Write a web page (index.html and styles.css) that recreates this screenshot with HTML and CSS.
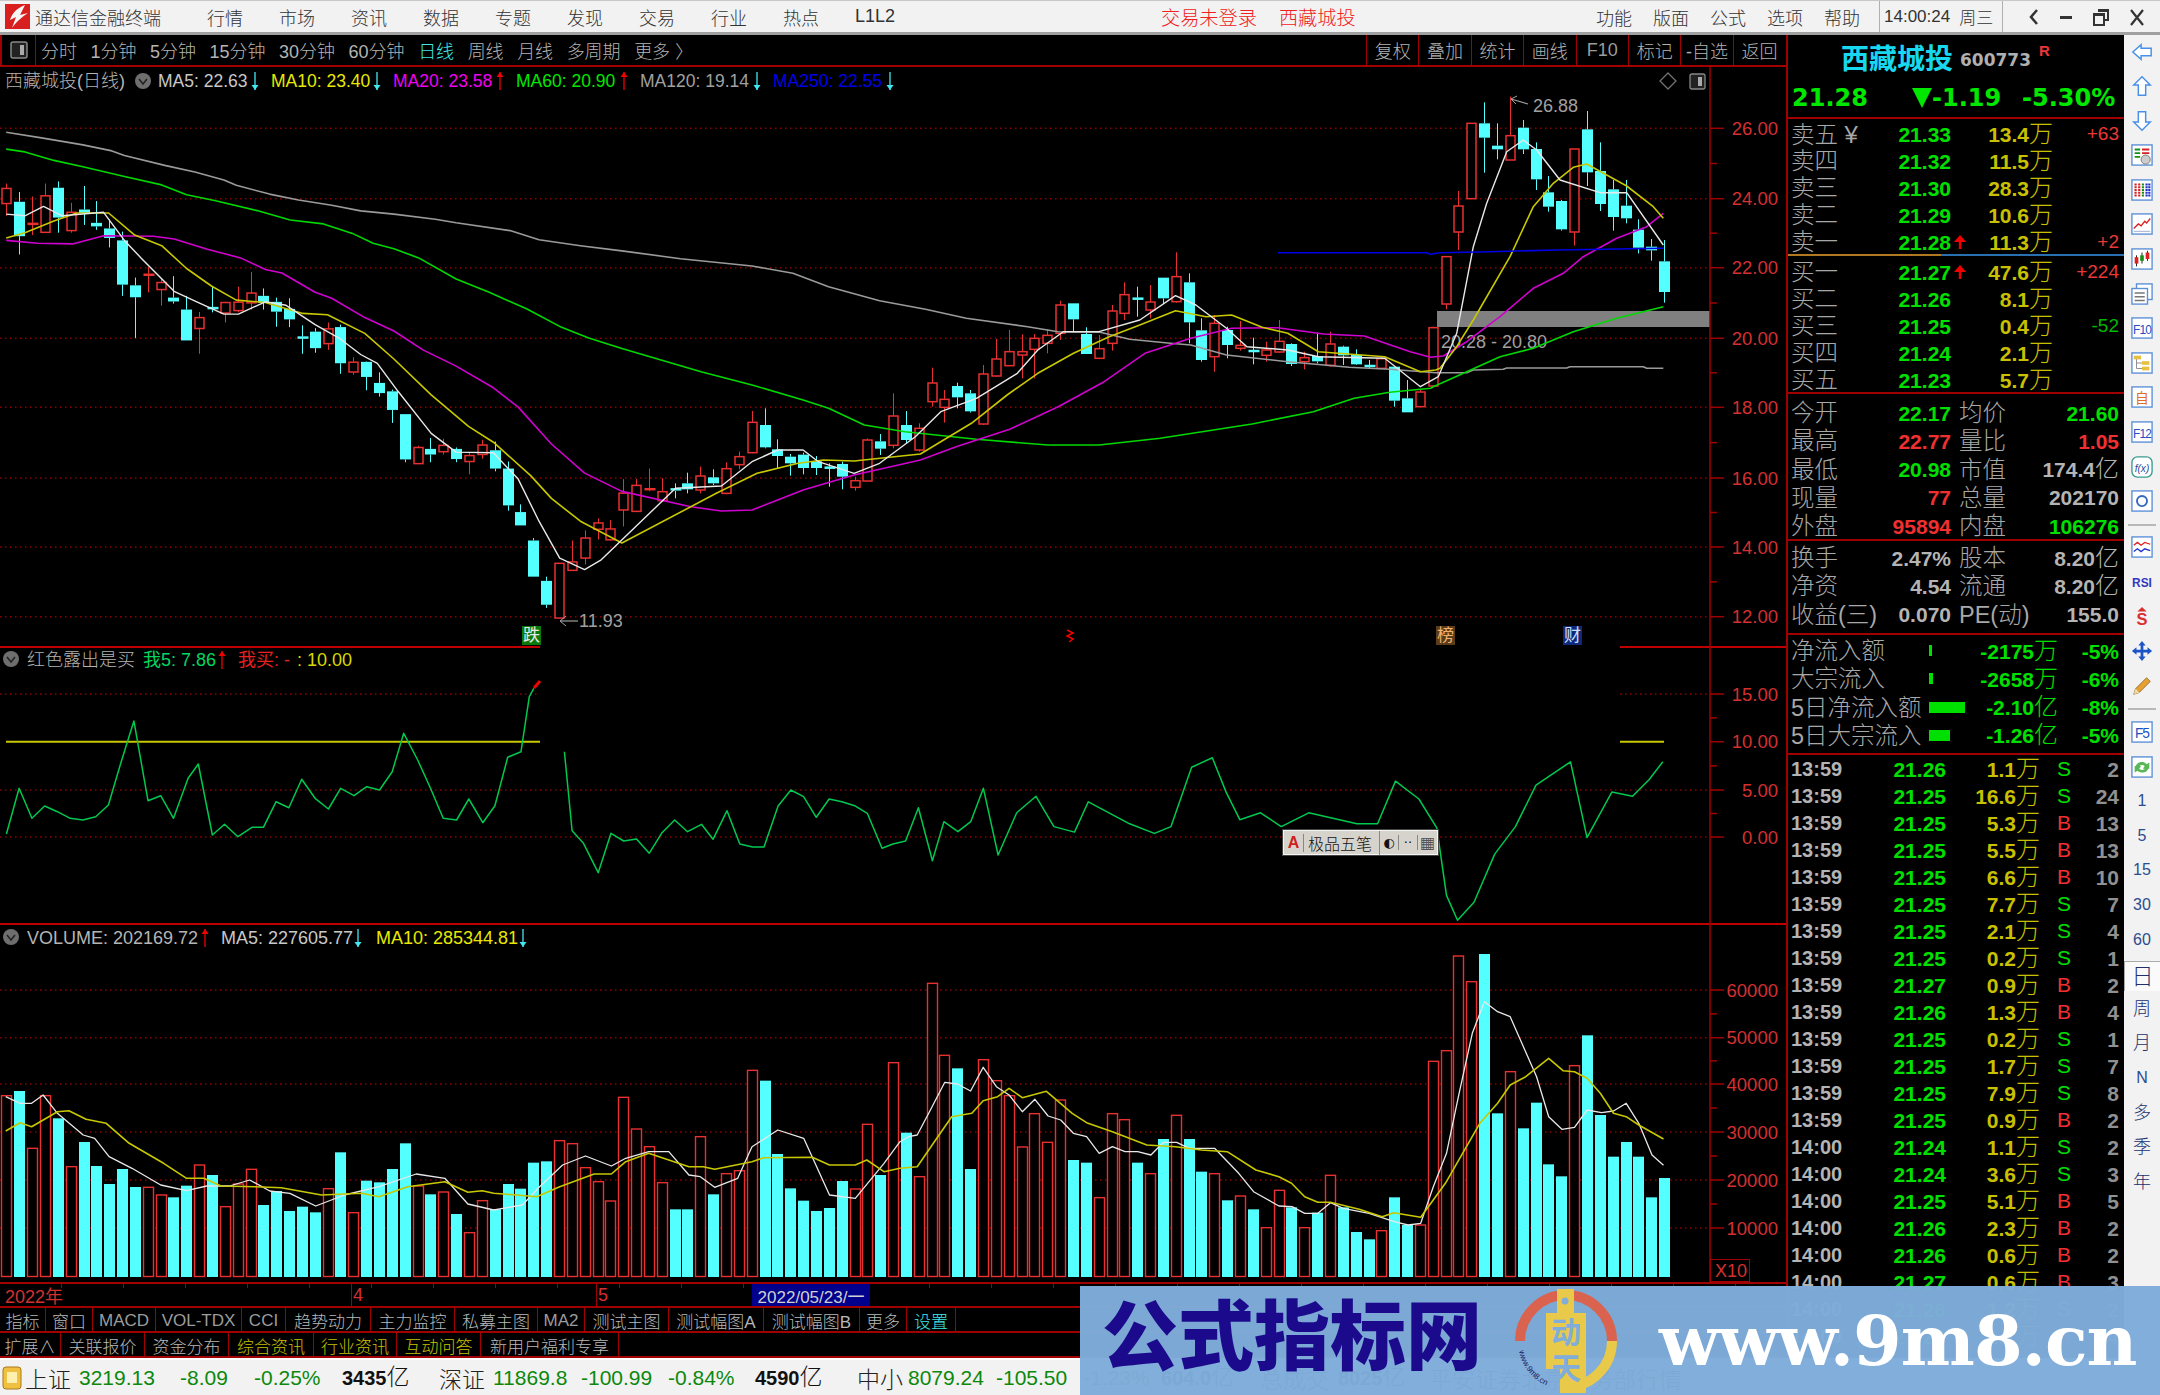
FILE: index.html
```html
<!DOCTYPE html>
<html lang="zh-CN">
<head>
    <meta charset="UTF-8">
    <title>通达信金融终端</title>
    <link rel="stylesheet" href="styles.css">
</head>
<body>
    <div class="app">
        <div class="titlebar">
            <div class="logo"><svg viewBox="0 0 25 25" width="25" height="25"><rect width="25" height="25" fill="#d81e1e"/><path d="M20 1 C12 4 7 9 5 16 L11 13 L7 24 C12 17 17 13 23 9 L15 11 Z" fill="#f5f5f5"/></svg></div>
            <span class="app-name">通达信金融终端</span>
            <nav class="menu">
                <span>行情</span><span>市场</span><span>资讯</span><span>数据</span><span>专题</span><span>发现</span><span>交易</span><span>行业</span><span>热点</span><span>L1L2</span>
            </nav>
            <div class="login"><span>交易未登录</span><span>西藏城投</span></div>
            <nav class="menu-right"><span>功能</span><span>版面</span><span>公式</span><span>选项</span><span>帮助</span></nav>
            <div class="clock"><span>14:00:24</span><span>周三</span></div>
            <div class="winbtns">
                <svg width="12" height="20" viewBox="0 0 12 20"><path d="M9 3 L3 10 L9 17" fill="none" stroke="#333" stroke-width="2.5"/></svg>
                <svg width="14" height="20" viewBox="0 0 14 20"><rect x="1" y="9" width="12" height="3" fill="#333"/></svg>
                <svg width="18" height="20" viewBox="0 0 18 20"><path d="M6 3 H16 V13 H13 M2 7 H12 V18 H2 Z M2 8 H12 M6 4 H16" fill="none" stroke="#333" stroke-width="2"/></svg>
                <svg width="16" height="20" viewBox="0 0 16 20"><path d="M2 3 L14 18 M14 3 L2 18" stroke="#333" stroke-width="2.2"/></svg>
            </div>
        </div>

        <div class="workarea">
            <div class="left">
                <div class="toolbar">
                    <div class="tool-icon"><svg width="18" height="18" viewBox="0 0 18 18"><rect x="1" y="1" width="16" height="16" rx="2" fill="#222" stroke="#888" stroke-width="1.5"/><rect x="10" y="4" width="4" height="10" fill="#aaa"/></svg></div>
                    <div class="periods">
                        <span>分时</span><span>1分钟</span><span>5分钟</span><span>15分钟</span><span>30分钟</span><span>60分钟</span><span class="active">日线</span><span>周线</span><span>月线</span><span>多周期</span><span>更多 〉</span>
                    </div>
                    <div class="tool-btns">
                        <span>复权</span><span>叠加</span><span>统计</span><span>画线</span><span class="dim">F10</span><span>标记</span><span>-自选</span><span>返回</span>
                    </div>
                </div>
                <svg id="chart" class="chart" viewBox="0 67 1786 1215" width="1786" height="1215"></svg>
                <div class="dateaxis">
                    <span class="date-cell w-year">2022年</span><span class="date-cell w-apr">4</span><span class="date-cell w-may">5</span><span class="date-box">2022/05/23/一</span>
                </div>
                <div class="tabs tabs-one">
                    <span>指标</span><span>窗口</span><span class="dim">MACD</span><span class="dim">VOL-TDX</span><span class="dim">CCI</span><span>趋势动力</span><span>主力监控</span><span>私募主图</span><span class="dim">MA2</span><span>测试主图</span><span>测试幅图A</span><span>测试幅图B</span><span>更多</span><span class="cyan">设置</span>
                </div>
                <div class="tabs tabs-two">
                    <span>扩展∧</span><span>关联报价</span><span>资金分布</span><span class="yellow">综合资讯</span><span class="yellow">行业资讯</span><span class="yellow">互动问答</span><span>新用户福利专享</span>
                </div>
            </div>

            <div class="quote">
                <div class="q-name"><span class="stock">西藏城投</span><span class="code">600773</span><sup class="r-mark">R</sup></div>
                <div class="q-price"><span class="last">21.28</span><span class="tri"></span><span class="chg">-1.19</span><span class="pct">-5.30%</span></div>

                <div class="book book-sell">
                    <div class="book-row"><span class="lbl">卖五 <em class="yen">¥</em></span><b class="up-g">21.33</b><i></i><b class="vol">13.4<small>万</small></b><span class="d-red">+63</span></div>
                    <div class="book-row"><span class="lbl">卖四</span><b class="up-g">21.32</b><i></i><b class="vol">11.5<small>万</small></b><span></span></div>
                    <div class="book-row"><span class="lbl">卖三</span><b class="up-g">21.30</b><i></i><b class="vol">28.3<small>万</small></b><span></span></div>
                    <div class="book-row"><span class="lbl">卖二</span><b class="up-g">21.29</b><i></i><b class="vol">10.6<small>万</small></b><span></span></div>
                    <div class="book-row"><span class="lbl">卖一</span><b class="up-g">21.28</b><i class="arr"><svg width="12" height="14" viewBox="0 0 12 14"><path d="M6 0 L12 7 H7.200 V14 H4.800 V7 H0 Z" fill="#f00000"/></svg></i><b class="vol">11.3<small>万</small></b><span class="d-red">+2</span></div>
                </div>
                <div class="book-split"></div>
                <div class="book book-buy">
                    <div class="book-row"><span class="lbl">买一</span><b class="up-g">21.27</b><i class="arr"><svg width="12" height="14" viewBox="0 0 12 14"><path d="M6 0 L12 7 H7.200 V14 H4.800 V7 H0 Z" fill="#f00000"/></svg></i><b class="vol">47.6<small>万</small></b><span class="d-red">+224</span></div>
                    <div class="book-row"><span class="lbl">买二</span><b class="up-g">21.26</b><i></i><b class="vol">8.1<small>万</small></b><span></span></div>
                    <div class="book-row"><span class="lbl">买三</span><b class="up-g">21.25</b><i></i><b class="vol">0.4<small>万</small></b><span class="d-green">-52</span></div>
                    <div class="book-row"><span class="lbl">买四</span><b class="up-g">21.24</b><i></i><b class="vol">2.1<small>万</small></b><span></span></div>
                    <div class="book-row"><span class="lbl">买五</span><b class="up-g">21.23</b><i></i><b class="vol">5.7<small>万</small></b><span></span></div>
                </div>

                <div class="info info-a">
                    <div class="info-row"><span class="lbl">今开</span><b class="up-g">22.17</b><span class="lbl2">均价</span><b class="up-g">21.60</b></div>
                    <div class="info-row"><span class="lbl">最高</span><b class="red">22.77</b><span class="lbl2">量比</span><b class="red">1.05</b></div>
                    <div class="info-row"><span class="lbl">最低</span><b class="up-g">20.98</b><span class="lbl2">市值</span><b class="grey">174.4<small>亿</small></b></div>
                    <div class="info-row"><span class="lbl">现量</span><b class="red">77</b><span class="lbl2">总量</span><b class="grey">202170</b></div>
                    <div class="info-row"><span class="lbl">外盘</span><b class="red">95894</b><span class="lbl2">内盘</span><b class="up-g">106276</b></div>
                </div>
                <div class="info info-b">
                    <div class="info-row"><span class="lbl">换手</span><b class="grey">2.47%</b><span class="lbl2">股本</span><b class="grey">8.20<small>亿</small></b></div>
                    <div class="info-row"><span class="lbl">净资</span><b class="grey">4.54</b><span class="lbl2">流通</span><b class="grey">8.20<small>亿</small></b></div>
                    <div class="info-row"><span class="lbl">收益(三)</span><b class="grey">0.070</b><span class="lbl2">PE(动)</span><b class="grey">155.0</b></div>
                </div>
                <div class="flows">
                    <div class="flow-row"><span class="lbl">净流入额</span><span class="flow-bar b1"></span><b class="up-g">-2175<small>万</small></b><b class="up-g">-5%</b></div>
                    <div class="flow-row"><span class="lbl">大宗流入</span><span class="flow-bar b2"></span><b class="up-g">-2658<small>万</small></b><b class="up-g">-6%</b></div>
                    <div class="flow-row"><span class="lbl">5日净流入额</span><span class="flow-bar b3"></span><b class="up-g">-2.10<small>亿</small></b><b class="up-g">-8%</b></div>
                    <div class="flow-row"><span class="lbl">5日大宗流入</span><span class="flow-bar b4"></span><b class="up-g">-1.26<small>亿</small></b><b class="up-g">-5%</b></div>
                </div>
                <div class="ticks" id="ticks"></div>
            </div>

            <div class="sidebar">
                <svg class="ico" viewBox="0 0 24 24"><path d="M2 12 L11 4 V8 H22 V16 H11 V20 Z" fill="#fff" stroke="#4a90e8" stroke-width="1.6"/></svg>
                <svg class="ico" viewBox="0 0 24 24"><path d="M12 2 L21 11 H16 V22 H8 V11 H3 Z" fill="#fff" stroke="#4a90e8" stroke-width="1.6"/></svg>
                <svg class="ico" viewBox="0 0 24 24"><path d="M12 22 L21 13 H16 V2 H8 V13 H3 Z" fill="#fff" stroke="#4a90e8" stroke-width="1.6"/></svg>
                <svg class="ico" viewBox="0 0 24 24"><rect x="1" y="1" width="22" height="22" fill="#fff" stroke="#5b8fd8" stroke-width="1.5"/><path d="M4 6 H10 M4 10 H10 M4 14 H10" stroke="#189018" stroke-width="2"/><path d="M12 6 H20 M12 10 H20" stroke="#d82020" stroke-width="2"/><circle cx="16" cy="17" r="5" fill="#ccc" stroke="#777"/></svg>
                <svg class="ico" viewBox="0 0 24 24"><rect x="1" y="1" width="22" height="22" fill="#fff" stroke="#5b8fd8" stroke-width="1.5"/><path d="M5 5 V19 M9 5 V19" stroke="#d82020" stroke-width="2.4" stroke-dasharray="2 1"/><path d="M13 5 V19" stroke="#189018" stroke-width="2.4" stroke-dasharray="2 1"/><path d="M17 5 V19 M20 5 V19" stroke="#2030c8" stroke-width="2.4" stroke-dasharray="2 1"/></svg>
                <svg class="ico" viewBox="0 0 24 24"><rect x="1" y="1" width="22" height="22" fill="#fff" stroke="#5b8fd8" stroke-width="1.5"/><path d="M3 17 L8 12 L11 14 L15 9 L17 11 L21 6" fill="none" stroke="#e02020" stroke-width="1.5"/><path d="M3 20 H21" stroke="#9ac" stroke-width="1"/></svg>
                <svg class="ico" viewBox="0 0 24 24"><rect x="1" y="1" width="22" height="22" fill="#fff" stroke="#5b8fd8" stroke-width="1.5"/><path d="M6 8 V20 M12 5 V17 M18 3 V14" stroke="#111" stroke-width="1"/><rect x="4" y="10" width="4" height="7" fill="#e02020"/><rect x="10" y="8" width="4" height="6" fill="#189018"/><rect x="16" y="5" width="4" height="7" fill="#e02020"/></svg>
                <svg class="ico" viewBox="0 0 24 24"><rect x="6" y="1" width="17" height="17" fill="#fff" stroke="#5b8fd8" stroke-width="1.5"/><rect x="1" y="6" width="17" height="17" fill="#fff" stroke="#5b8fd8" stroke-width="1.5"/><path d="M4 11 H15 M4 15 H15 M4 19 H15" stroke="#777" stroke-width="1.6"/></svg>
                <svg class="ico" viewBox="0 0 24 24"><rect x="1" y="1" width="22" height="22" fill="#fff" stroke="#5b8fd8" stroke-width="1.5"/><text x="12" y="18" class="ico-text">F10</text></svg>
                <svg class="ico" viewBox="0 0 24 24"><rect x="1" y="1" width="22" height="22" fill="#fff" stroke="#5b8fd8" stroke-width="1.5"/><path d="M6 7 V18 H13 M6 12 H13" fill="none" stroke="#888"/><rect x="3" y="4" width="8" height="4" fill="#e8c040"/><rect x="12" y="10" width="8" height="4" fill="#e8c040"/><rect x="12" y="16" width="8" height="4" fill="#e8c040"/></svg>
                <svg class="ico" viewBox="0 0 24 24"><rect x="1" y="1" width="22" height="22" fill="#fff" stroke="#5b8fd8" stroke-width="1.5"/><text x="12" y="18" class="ico-zi">自</text></svg>
                <svg class="ico" viewBox="0 0 24 24"><rect x="1" y="1" width="22" height="22" fill="#fff" stroke="#5b8fd8" stroke-width="1.5"/><text x="12" y="18" class="ico-text">F12</text></svg>
                <svg class="ico" viewBox="0 0 24 24"><rect x="1" y="1" width="22" height="22" rx="6" fill="#fff" stroke="#3c9c90" stroke-width="1.5"/><text x="12" y="17" class="ico-fx">f(x)</text></svg>
                <svg class="ico" viewBox="0 0 24 24"><rect x="1" y="1" width="22" height="22" fill="#fff" stroke="#5b8fd8" stroke-width="1.5"/><circle cx="12" cy="12" r="5.5" fill="none" stroke="#3068c0" stroke-width="2"/></svg>
                <div class="side-sep"></div>
                <svg class="ico" viewBox="0 0 24 24"><rect x="1" y="1" width="22" height="22" fill="#fff" stroke="#5b8fd8" stroke-width="1.5"/><path d="M3 10 L7 7 L11 10 L15 7 L21 9" fill="none" stroke="#e02020" stroke-width="1.4"/><path d="M3 17 L7 14 L11 17 L15 14 L21 16" fill="none" stroke="#2030c8" stroke-width="1.4"/></svg>
                <svg class="ico" viewBox="0 0 24 24"><text x="12" y="17" class="ico-rsi">RSI</text></svg>
                <svg class="ico" viewBox="0 0 24 24"><path d="M12 1 L17 6 H7 Z" fill="#d83030"/><text x="12" y="21" class="ico-s">S</text></svg>
                <svg class="ico" viewBox="0 0 24 24"><path d="M12 1 L16 6 H13.500 V10.500 H18 V8 L23 12 L18 16 V13.500 H13.500 V18 H16 L12 23 L8 18 H10.500 V13.500 H6 V16 L1 12 L6 8 V10.500 H10.500 V6 H8 Z" fill="#1c54c8"/></svg>
                <svg class="ico" viewBox="0 0 24 24"><path d="M3 21 L5 15 L17 3 L21 7 L9 19 Z" fill="#e8a030" stroke="#907030"/><path d="M3 21 L5 15 L9 19 Z" fill="#f0dcb0"/></svg>
                <div class="side-sep"></div>
                <svg class="ico" viewBox="0 0 24 24"><rect x="1" y="1" width="22" height="22" fill="#fff" stroke="#5b8fd8" stroke-width="1.5"/><text x="12" y="18" class="ico-text big">F5</text></svg>
                <svg class="ico" viewBox="0 0 24 24"><rect x="1" y="1" width="22" height="22" fill="#fff" stroke="#5b8fd8" stroke-width="1.5"/><path d="M5 12 C6 6 14 5 17 9 L20 7 V14 H13 L15 11 C13 9 9 9 8 13 Z M19 13 C18 19 10 19 7 16 L4 18 V11 H11 L9 14 C11 16 15 16 16 12 Z" fill="#58b858"/></svg>
                <span class="side-num">1</span><span class="side-num">5</span><span class="side-num">15</span><span class="side-num">30</span><span class="side-num">60</span>
                <span class="side-day selected">日</span><span class="side-day">周</span><span class="side-day">月</span><span class="side-num">N</span><span class="side-day">多</span><span class="side-day">季</span><span class="side-day">年</span>
            </div>
        </div>

        <div class="statusbar">
            <svg width="20" height="24" viewBox="0 0 20 24"><rect x="1" y="1" width="18" height="22" rx="3" fill="#f0c040" stroke="#a87818"/><rect x="5" y="6" width="10" height="11" fill="#fff0b0"/></svg>
            <span class="s-idx">上证</span><span class="s-g c1">3219.13</span><span class="s-g c2">-8.09</span><span class="s-g c3">-0.25%</span><span class="s-k c4">3435<small>亿</small></span>
            <span class="s-idx c5">深证</span><span class="s-g c1b">11869.8</span><span class="s-g c2b">-100.99</span><span class="s-g c3b">-0.84%</span><span class="s-k c4b">4590<small>亿</small></span>
            <span class="s-idx c5b">中小</span><span class="s-g c1b">8079.24</span><span class="s-g c2b">-105.50</span><span class="s-g c3c">-1.23%</span><span class="s-k c4c">604.0<small>亿</small></span><span class="s-idx c5c">总成交</span><span class="s-k c4d">8025<small>亿</small></span><span class="s-idx c5d">平安证券北京业务部行情</span>
        </div>

        <div class="ime">
            <span class="ime-a">A</span><span class="ime-name">极品五笔</span><span class="ime-btn">◐</span><span class="ime-btn">··</span><span class="ime-kb">▦</span>
        </div>

        <div class="watermark">
            <span class="wm-title">公式指标网</span>
            <svg class="wm-logo" width="104" height="104" viewBox="0 0 104 104">
                <path d="M6 52 A46 46 0 0 1 98 52" fill="none" stroke="#d9634e" stroke-width="10"/>
                <path d="M98 52 A46 46 0 0 1 52 98" fill="none" stroke="#e8c94a" stroke-width="10"/>
                <path d="M43 0 H60 V24 H72 V104 H46 V80 H32 V24 H43 Z" fill="#e8c94a"/>
                <circle cx="51" cy="12" r="3.500" fill="#80add9"/>
                <text x="52" y="54" class="logo-glyph">动</text>
                <text x="52" y="90" class="logo-glyph">天</text>
                <path id="wmarc" d="M5 62 A48 48 0 0 0 44 100" fill="none"/>
                <text class="logo-small"><textPath href="#wmarc">www.9m8.cn</textPath></text>
            </svg>
            <span class="wm-url">www.9m8.cn</span>
        </div>
    </div>

    <script src="chart.js"></script>
</body>
</html>
```

FILE: styles.css
```css
* {
    box-sizing: border-box;
}
body {
    margin: 0;
    background: #000;
    font-family: "Liberation Sans", "Noto Sans CJK SC", sans-serif;
}
.app {
    position: relative;
    width: 2160px;
    height: 1395px;
    overflow: hidden;
    display: flex;
    flex-direction: column;
}

/* title bar */
.titlebar {
    height: 35px;
    flex: none;
    display: flex;
    align-items: center;
    background: #f2f2f2;
    border-top: 1px solid #c8c8c8;
    border-bottom: 3px solid #a0a0a0;
    color: #333;
    font-size: 18px;
    font-weight: 300;
}
.logo {
    width: 35px;
    padding-left: 5px;
    height: 25px;
}
.app-name {
    width: 172px;
}
.menu {
    display: flex;
    align-items: center;
    gap: 36px;
    width: 954px;
}
.login {
    width: 435px;
    display: flex;
    gap: 22px;
    color: #f02020;
    font-size: 19.200px;
}
.menu-right {
    display: flex;
    gap: 21px;
    width: 283px;
}
.clock {
    width: 124px;
    height: 31px;
    display: flex;
    align-items: center;
    gap: 9px;
    padding-left: 4px;
    border-left: 1px solid #b0b0b0;
    border-right: 1px solid #b0b0b0;
    font-size: 17px;
}
.winbtns {
    flex: 1;
    display: flex;
    justify-content: space-around;
    align-items: center;
    padding: 0 6px 0 16px;
}

.workarea {
    height: 1323px;
    flex: none;
    display: flex;
}
.left {
    width: 1788px;
    flex: none;
    display: flex;
    flex-direction: column;
    background: #000;
    border-right: 2px solid #a00000;
}

/* period toolbar */
.toolbar {
    height: 32px;
    flex: none;
    display: flex;
    align-items: center;
    border-bottom: 2px solid #a00000;
    color: #b4b4b4;
    font-size: 18px;
    font-weight: 300;
}
.tool-icon {
    width: 36px;
    height: 30px;
    display: flex;
    align-items: center;
    justify-content: center;
    border-left: 2px solid #a00000;
    border-right: 1px solid #a00000;
}
.periods {
    display: flex;
    gap: 13.500px;
    padding-left: 5px;
    width: 1330px;
}
.periods .active {
    color: #40e8e8;
}
.tool-btns {
    flex: 1;
    height: 30px;
    display: flex;
}
.tool-btns span {
    width: 52.400px;
    display: flex;
    align-items: center;
    justify-content: center;
    border-left: 1px solid #a00000;
    white-space: nowrap;
}
.tool-btns .dim,
.tabs .dim {
    color: #9c9c9c;
}

.chart {
    display: block;
    flex: none;
}
.chart text {
    font-family: "Liberation Sans", "Noto Sans CJK SC", sans-serif;
    font-size: 18px;
    dominant-baseline: central;
}
.chart .axis-label {
    text-anchor: end;
    fill: #d43030;
    font-size: 18.500px;
}
.chart .thin {
    font-weight: 300;
}

/* date row and tab rows */
.dateaxis {
    height: 24px;
    flex: none;
    display: flex;
    border-top: 2px solid #a00000;
    color: #d43030;
    font-size: 18px;
    background: repeating-linear-gradient(90deg, transparent 0 61px, #a00000 61px 62px) top / 100% 4px no-repeat;
}
.date-cell {
    padding-left: 5px;
    display: flex;
    align-items: center;
}
.w-year {
    width: 351px;
}
.w-apr {
    width: 245px;
    border-left: 1px solid #a00000;
    padding-left: 1px;
}
.w-may {
    width: 156px;
    border-left: 1px solid #a00000;
    padding-left: 1px;
}
.date-box {
    width: 118px;
    background: #00008c;
    color: #d0d0d0;
    display: flex;
    align-items: center;
    justify-content: center;
    font-size: 17px;
    white-space: nowrap;
}
.tabs {
    flex: none;
    display: grid;
    color: #b8b8b8;
    font-size: 17px;
    font-weight: 300;
    border-top: 2px solid #a00000;
}
.tabs span {
    display: flex;
    align-items: center;
    justify-content: center;
    white-space: nowrap;
    border-right: 1px solid #a00000;
}
.tabs-one {
    height: 25px;
    grid-template-columns: 46px 47px 63px 86px 44px 85px 84px 83px 47px 84px 95px 96px 47px 49px;
    justify-content: start;
}
.tabs-two {
    height: 27px;
    grid-template-columns: 61px 84px 84px 85px 83px 84px 138px;
    justify-content: start;
    border-bottom: 2px solid #a00000;
}
.tabs .cyan {
    color: #40e8e8;
}
.tabs .yellow {
    color: #c8c000;
}

/* quote panel */
.quote {
    width: 336px;
    flex: none;
    background: #000;
    color: #a8a8a8;
    overflow: hidden;
}
.q-name {
    height: 44px;
    display: flex;
    align-items: center;
    padding-left: 53px;
}
.stock {
    color: #18d8f0;
    font-size: 28px;
    font-weight: 700;
}
.code {
    margin-left: 7px;
    margin-top: 6px;
    color: #b0b0b0;
    font-family: "DejaVu Sans", sans-serif;
    font-size: 17px;
    font-weight: 700;
}
.r-mark {
    margin: -14px 0 0 8px;
    color: #e83838;
    font-size: 15px;
    font-weight: 700;
}
.q-price {
    height: 40px;
    display: flex;
    align-items: center;
    padding-left: 4px;
    border-bottom: 2px solid #a00000;
    color: #00e800;
    font-family: "DejaVu Sans", sans-serif;
    font-weight: 700;
    font-size: 24px;
}
.last {
    width: 120px;
}
.tri {
    width: 0;
    height: 0;
    border-left: 10px solid transparent;
    border-right: 10px solid transparent;
    border-top: 20px solid #00e800;
}
.chg {
    width: 90px;
}
.book-row,
.info-row,
.flow-row,
.tick-row {
    display: grid;
    align-items: center;
    padding-left: 3px;
    white-space: nowrap;
}
.book-row {
    height: 27px;
    grid-template-columns: 107px 53px 17px 85px 66px;
}
.lbl,
.lbl2 {
    margin-top: 2px;
    font-size: 23.500px;
    font-weight: 300;
    line-height: 27px;
}
.yen {
    font-style: normal;
    font-size: 24px;
}
b {
    margin-top: 1px;
    font-size: 21px;
    line-height: 27px;
    text-align: right;
}
b small {
    font-size: 24px;
    font-weight: 300;
    line-height: 0;
}
.up-g {
    color: #00e000;
}
.red {
    color: #f03030;
    text-align: right;
}
.grey {
    color: #b4b4b4;
    text-align: right;
}
.vol {
    color: #c8c000;
}
.arr {
    display: flex;
    justify-content: center;
}
.d-red,
.d-green {
    font-size: 19px;
    text-align: right;
}
.d-red {
    color: #e83838;
}
.d-green {
    color: #00b800;
}
.book-split {
    height: 2px;
    background: linear-gradient(90deg, #b07820 0 153px, #2870b0 153px);
}
.book-buy {
    padding-top: 1px;
    height: 138px;
    border-bottom: 2px solid #a00000;
    margin-bottom: 2px;
}
.info-row {
    height: 28.250px;
    grid-template-columns: 60px 100px 68px 100px;
}
.lbl2 {
    padding-left: 8px;
}
.info-a {
    height: 145px;
    padding-top: 2px;
    border-bottom: 2px solid #a00000;
}
.info-b {
    height: 94px;
    padding-top: 2px;
    border-bottom: 2px solid #a00000;
}
.flow-row {
    height: 28.300px;
    grid-template-columns: 138px 40px 89px 61px;
}
.flows {
    height: 120px;
    padding-top: 1px;
    border-bottom: 2px solid #a00000;
}
.flow-bar {
    height: 11px;
    background: #00e000;
}
.b1 {
    width: 3px;
}
.b2 {
    width: 4px;
}
.b3 {
    width: 36px;
}
.b4 {
    width: 21px;
}
.tick-row {
    height: 27px;
    grid-template-columns: 60px 95px 94px 48px 31px;
}
.tick-row .t {
    color: #b4b4b4;
    font-weight: 700;
    font-size: 20px;
    text-align: left;
}
.tick-row .bs {
    text-align: center;
    font-size: 21px;
}
.bs-b {
    color: #f03030;
}
.bs-s {
    color: #00e000;
}
.tick-row .n {
    color: #909090;
}

/* right sidebar */
.sidebar {
    flex: 1;
    display: flex;
    flex-direction: column;
    align-items: center;
    padding-top: 5.500px;
    background: #f2f2f2;
    gap: 12.600px;
}
.ico {
    width: 22px;
    height: 22px;
    flex: none;
    overflow: visible;
}
.ico-text,
.ico-rsi,
.ico-fx,
.ico-zi,
.ico-s {
    text-anchor: middle;
    font-size: 12px;
    fill: #2050c0;
}
.ico-text {
    font-size: 13px;
    letter-spacing: -1px;
}
.ico-text.big {
    font-size: 15px;
}
.ico-zi {
    font-size: 15px;
    fill: #e07020;
}
.ico-fx {
    font-style: italic;
    font-size: 11px;
    fill: #2848a0;
}
.ico-rsi {
    font-weight: 700;
    font-size: 13px;
    fill: #3038c0;
}
.ico-s {
    font-weight: 700;
    font-size: 18px;
    fill: #d83030;
}
.side-sep {
    width: 28px;
    height: 2px;
    flex: none;
    margin: -1px 0 -2px;
    background: #b8b8b8;
}
.side-num,
.side-day {
    height: 22px;
    line-height: 22px;
    flex: none;
    color: #2c4c90;
    font-size: 16px;
}
.side-day {
    font-size: 18px;
    font-weight: 300;
    color: #203070;
}
.selected {
    width: 36px;
    height: 30px;
    margin: -2px 0 -6px;
    line-height: 30px;
    text-align: center;
    font-size: 22px;
    background: #fafafa;
    border-top: 1px solid #aaa;
    border-left: 1px solid #aaa;
}

/* index strip */
.statusbar {
    height: 37px;
    flex: none;
    display: flex;
    align-items: center;
    padding-left: 2px;
    background: #f2f2f2;
    border-top: 2px solid #fff;
    font-size: 21px;
    white-space: nowrap;
}
.s-idx {
    margin-left: 3px;
    width: 54px;
    color: #222;
    font-size: 23px;
    font-weight: 300;
}
.s-g {
    color: #0c880c;
}
.s-k {
    margin-top: 0;
    color: #111;
    font-weight: 700;
    font-size: 20px;
    line-height: 30px;
}
.s-k small {
    font-size: 23px;
    font-weight: 300;
    line-height: 0;
}
.c1 {
    width: 101px;
}
.c2 {
    width: 74px;
}
.c3 {
    width: 88px;
}
.c4 {
    width: 94px;
}
.c5 {
    width: 54px;
}
.c1b {
    width: 88px;
}
.c2b {
    width: 87px;
}
.c3b {
    width: 87px;
}
.c4b {
    width: 99px;
}
.c5b {
    width: 51px;
}
.c3c {
    width: 78px;
}
.c4c {
    width: 96px;
}
.c5c {
    width: 78px;
}
.c4d {
    width: 88px;
}
.c5d {
    width: 300px;
}

/* input method bar sits on top of the chart */
.ime {
    position: absolute;
    left: 1283px;
    top: 830px;
    width: 155px;
    height: 25px;
    display: flex;
    align-items: center;
    background: #d6d3cc;
    border: 1px solid #f4f4f4;
    outline: 1px solid #444;
    color: #111;
    font-size: 16px;
}
.ime-a {
    width: 20px;
    text-align: center;
    color: #d02020;
    font-weight: 700;
    border-right: 1px solid #888;
}
.ime-name {
    width: 76px;
    padding-left: 4px;
    font-weight: 300;
    border-right: 1px solid #888;
}
.ime-btn {
    width: 19px;
    text-align: center;
    font-family: "DejaVu Sans", sans-serif;
    font-size: 13px;
    border-right: 1px solid #888;
}
.ime-kb {
    flex: 1;
    text-align: center;
    font-family: "DejaVu Sans", sans-serif;
    color: #555;
}

/* watermark banner */
.watermark {
    position: absolute;
    left: 1080px;
    top: 1286px;
    width: 1080px;
    height: 109px;
    display: flex;
    align-items: center;
    padding-left: 22px;
    background: rgba(126, 172, 217, .975);
}
.wm-title {
    width: 373px;
    margin-top: -6px;
    color: #1c0a8c;
    font-size: 76px;
    font-weight: 900;
    line-height: 1;
    white-space: nowrap;
}
.wm-logo {
    flex: none;
    margin-left: 39px;
}
.logo-glyph {
    text-anchor: middle;
    fill: #80add9;
    font-size: 30px;
    font-weight: 700;
}
.logo-small {
    font-size: 8px;
    fill: #1a1a60;
}
.wm-url {
    margin-left: 41px;
    color: #fff;
    font-family: "DejaVu Serif", serif;
    font-size: 70px;
    font-weight: 700;
    letter-spacing: -1px;
    white-space: nowrap;
}
```

FILE: chart.js
```js
// trace helpers: each block of numbers was read off a different crop of the source
const traceA = ([x, y]) => [x / 2.412, 100 + y * 0.351];
const traceB = ([x, y]) => [650 + x / 1.96, 230 + y / 3];
const traceC = ([x, y]) => [1300 + x / 3, 80 + y / 3];
const traceVolA = ([x, y]) => [x / 1.742, 930 + y / 3];
const traceVolB = ([x, y]) => [900 + x / 1.742, 930 + y / 3];
const traceInd = ([x, y]) => [x / 1.568, 640 + y / 3];
const traceThumb = ([x, y]) => [x * 1.3776, y * 1.3776];

const RED = '#e83030';
const CYAN = '#54ffff';
const GRID = '#a00000';
const SPACING = 12.85;
const barX = i => 6.4 + SPACING * i;

// [up, high, top, bottom, low]
const candlesA = [
    [1,238,252,295,330],[0,262,290,388,440],[1,275,350,355,385],[1,238,273,377,377],[0,232,250,335,378],
    [1,293,320,372,378],[0,245,312,322,356],[0,288,350,360,370],[0,340,366,393,420],[0,375,400,526,558],
    [0,506,528,562,678],[1,476,495,500,548],[1,510,520,540,586],[0,502,563,574,580],[0,558,597,685,685],
    [1,604,620,651,723],[0,532,590,597,605],[1,575,577,607,634],[1,532,576,600,605],[1,490,550,578,597],
    [0,537,558,578,597],[0,563,575,603,646],[0,565,595,625,647],[0,642,674,677,723],[0,650,660,707,720],
    [1,634,652,694,712],[0,640,647,750,780],[1,733,747,775,783],[0,745,746,789,827],[0,776,806,835,845],
    [0,825,830,883,920],[0,895,895,1024,1032],[1,985,990,1036,1036],[0,963,994,1010,1032],[1,965,984,1002,1010],
    [0,990,994,1023,1032],[1,1005,1013,1030,1066],[1,968,983,1010,1022],[0,973,998,1050,1058],[0,1030,1050,1155,1170],
    [0,1152,1174,1212,1212],[0,1248,1255,1358,1358],[0,1358,1370,1438,1447],[1,1320,1320,1476,1476],[1,1255,1316,1340,1340],
    [1,1226,1248,1305,1323],[1,1192,1205,1223,1252],[1,1197,1222,1253,1255],[1,1080,1120,1168,1215],[1,1080,1098,1172,1172],
    [1,1050,1106,1112,1115]
];
const candlesB = [
    [1,745,785,812,815],[0,760,775,783,805],[0,728,760,778,790],[1,710,738,780,790],[0,718,742,760,765],
    [1,697,716,790,793],[1,665,680,704,718],[1,543,577,668,670],[0,535,585,652,655],[0,628,658,678,715],
    [0,672,680,700,737],[0,668,674,714,733],[0,678,694,714,735],[0,700,710,712,770],[0,695,702,740,778],
    [1,740,752,772,782],[1,625,630,753,753],[0,612,634,656,675],[1,490,558,646,655],[0,543,585,630,640],
    [1,580,595,660,665],[1,413,459,515,530],[1,480,508,532,578],[0,458,468,502,535],[0,480,490,544,548],
    [1,405,432,582,585],[1,327,387,438,440],[1,300,365,407,408],[1,313,365,375,445],[1,312,325,358,445],
    [1,298,316,340,370],[1,212,225,310,330],[0,220,220,268,305],[0,292,312,372,372],[1,315,356,385,385],
    [1,225,243,340,362],[1,157,194,250,270],[0,170,203,209,260],[1,165,216,240,265],[0,143,143,205,220],
    [1,67,140,215,218],[0,130,157,277,340],[0,265,301,390,395],[1,255,280,380,425],[0,290,300,345,385],
    [1,273,346,355,362],[0,323,360,364,403],[1,335,360,376,395],[1,270,334,366,368],[0,340,342,402,408],
    [1,365,383,395,418],[0,308,378,394,400],[1,305,342,406,410],[0,347,350,376,405],[0,358,375,403,405],
    [0,390,405,407,415],[1,380,386,415,418]
];
const candlesC = [
    [0,860,860,962,980],[0,900,955,997,997],[1,930,936,980,980],[1,740,743,918,918],[1,528,530,672,688],
    [1,333,378,456,510],[1,130,130,356,356],[0,67,130,173,278],[0,130,197,208,238],[1,50,167,240,240],
    [0,120,143,208,222],[0,187,207,298,330],[0,288,337,380,395],[0,360,363,448,452],[1,207,207,456,497],
    [0,93,148,277,318],[0,187,273,372,393],[0,300,328,411,452],[0,300,377,415,430],[0,418,449,503,520],
    [0,477,500,511,542],[0,480,544,636,668]
];

const ma120 = [
    ...[[15,92],[100,108],[200,128],[270,145],[300,158],[400,187],[470,205],[540,228],[570,243],[650,268],[720,285],[800,300],[870,316],[950,325],[1050,340],[1100,350],[1230,372],[1300,398],[1400,415],[1500,430]].map(traceA),
    ...[[60,86],[200,108],[280,130],[350,170],[450,212],[540,238],[620,265],[740,290],[800,305],[880,306],[940,328],[1020,340],[1060,345],[1130,375],[1250,395],[1370,412],[1450,418],[1540,428]].map(traceB),
    ...[[500,878],[520,870],[610,868],[620,864],[800,864],[810,860],[1030,860],[1040,865],[1090,865]].map(traceC)
];
const ma60 = [
    ...[[15,140],[60,148],[130,172],[200,190],[300,218],[390,242],[450,270],[520,287],[620,315],[700,342],[780,353],[850,380],[900,408],[950,424],[1010,450],[1100,510],[1180,548],[1270,595],[1350,645],[1420,678],[1500,708]].map(traceA),
    ...[[100,425],[200,465],[300,510],[350,535],[420,585],[500,605],[640,628],[780,645],[880,645],[1000,625],[1180,582],[1300,545],[1380,505],[1450,487],[1530,475]].map(traceB),
    ...[[400,920],[500,875],[600,830],[700,805],[820,755],[950,715],[1090,680]].map(traceC)
];
const ma20 = [
    ...[[15,400],[90,408],[175,410],[250,387],[370,388],[420,396],[500,425],[580,450],[640,483],[680,493],[760,548],[800,565],[880,620],[950,658],[1020,712],[1100,758],[1190,820],[1250,875],[1330,980],[1410,1063],[1500,1115]].map(traceA),
    ...[[80,830],[140,843],[200,840],[300,780],[400,735],[530,690],[600,650],[705,598],[800,530],[890,455],[970,370],[1060,325],[1140,295],[1230,293],[1320,312],[1400,318],[1490,365],[1530,382]].map(traceB),
    ...[[390,832],[430,828],[500,785],[600,710],[700,625],[790,580],[850,530],[950,475],[1040,440],[1090,400]].map(traceC)
];
const ma10 = [
    ...[[15,393],[60,378],[130,345],[185,322],[262,322],[325,385],[390,415],[450,480],[510,530],[570,570],[640,577],[730,608],[790,612],[880,665],[950,738],[1040,840],[1130,930],[1190,975],[1280,1070],[1330,1135],[1400,1200],[1500,1262]].map(traceA),
    ...[[130,790],[210,730],[290,700],[340,690],[400,693],[530,672],[630,580],[700,495],[760,430],[830,370],[900,320],[960,285],[1030,242],[1090,260],[1140,255],[1200,292],[1250,310],[1310,365],[1440,380],[1510,425],[1540,420]].map(traceB),
    ...[[420,865],[470,800],[520,720],[630,530],[700,380],[760,310],[820,262],[860,252],[920,285],[980,318],[1060,380],[1090,415]].map(traceC)
];
const ma5 = [
    ...[[15,325],[60,330],[105,303],[150,330],[250,320],[300,400],[340,450],[420,545],[480,578],[540,610],[575,610],[640,575],[690,585],[760,640],[820,680],[870,725],[910,750],[960,830],[1040,950],[1100,1003],[1190,1005],[1250,1080],[1300,1200],[1350,1305],[1410,1338],[1450,1310]].map(traceA),
    ...[[50,775],[140,768],[200,695],[250,660],[300,660],[330,695],[400,730],[450,700],[520,620],[570,545],[640,505],[720,430],[760,360],[810,305],[880,305],[960,270],[1030,197],[1070,225],[1130,295],[1170,350],[1250,360],[1310,380],[1440,385],[1510,470],[1545,440]].map(traceB),
    ...[[470,760],[520,500],[560,370],[620,215],[670,180],[710,210],[780,300],[900,338],[980,338],[1090,495]].map(traceC)
];
const ma250 = [[-66,518],[380,518],[390,523],[420,518],[570,515],[770,510],[1090,505]].map(traceC);

const indLeft = [[10,582],[30,445],[50,535],[70,498],[90,515],[110,535],[130,540],[150,530],[170,495],[190,365],[210,243],[232,482],[252,467],[272,535],[295,415],[311,372],[333,585],[352,553],[373,590],[395,562],[413,562],[433,485],[453,503],[473,418],[494,475],[515,507],[534,445],[555,467],[575,440],[595,450],[615,395],[633,280],[655,360],[675,445],[695,535],[716,540],[735,477],[757,548],[776,497],[796,352],[817,335],[830,170],[837,145]].map(traceInd);
const indRight = [
    ...[[885,335],[897,572],[915,610],[938,698],[958,580],[978,603],[998,597],[1018,640],[1038,578],[1058,540],[1078,575],[1100,553],[1118,598],[1140,512],[1160,612],[1180,621],[1198,621],[1220,498],[1240,450],[1260,470],[1280,532],[1300,477],[1320,485],[1340,497],[1360,520],[1383,625],[1400,612],[1420,603],[1440,503],[1462,662],[1480,545],[1502,575],[1522,545],[1542,445],[1565,645]].map(traceInd),
    ...[[738,590],[752,578],[765,600],[780,604],[790,582],[805,590],[820,598],[838,605],[850,600],[865,557],[880,550],[890,575],[900,595],[915,590],[930,600],[950,590],[985,598],[1000,598],[1013,567],[1030,580],[1043,601],[1050,650],[1058,668],[1070,655],[1085,620],[1100,600],[1115,570],[1140,553],[1152,608],[1170,575],[1185,578],[1197,566],[1207,553]].map(traceThumb)
];

// [up, top of bar]
const volA = [
    [1,497],[0,483],[1,655],[1,497],[0,565],[1,710],[0,636],[0,708],[0,762],[0,717],[0,771],[1,772],[1,795],[0,802],[0,767],
    [1,705],[0,735],[1,830],[1,762],[1,718],[0,825],[0,783],[0,843],[0,830],[0,847],[1,776],[0,667],[1,848],[0,752],[0,757],
    [0,717],[0,640],[1,768],[0,793],[1,786],[0,852],[1,908],[1,812],[0,838],[0,762],[0,776],[0,698],[0,694],[1,632],[1,641],
    [1,713],[1,755],[1,813],[1,502],[1,597],[1,650],[1,758],[0,838],[0,838],[1,620],[0,793],[1,731],[1,722],[1,421],[0,452],
    [0,672],[0,775],[0,812],[0,843],[0,834],[0,753],[1,777],[1,583],[0,735],[1,398]
];
const volB = [
    [0,608],[1,740],[1,160],[1,376],[0,415],[0,717],[1,389],[1,452],[1,497],[1,651],[1,551],[1,637],[1,510],[0,690],[0,698],
    [1,803],[1,551],[1,569],[0,698],[1,731],[0,627],[1,556],[0,627],[0,725],[1,731],[0,811],[1,798],[0,838],[1,893],[1,781],
    [0,832],[1,893],[0,848],[1,736],[0,832],[0,906],[0,928],[1,902],[0,802],[0,885],[1,885],[1,394],[1,362],[1,78],[1,155],
    [0,72],[0,550],[1,425],[0,595],[0,518],[0,703],[0,739],[1,407],[0,316],[0,555],[0,680],[0,636],[0,680],[0,802],[0,744]
];
const volMa5 = [
    ...[[10,500],[35,520],[55,520],[75,495],[100,550],[145,615],[165,625],[190,680],[230,715],[280,765],[325,782],[360,768],[400,768],[435,750],[470,783],[505,790],[550,828],[600,795],[660,770],[725,732],[775,745],[815,822],[860,840],[910,825],[940,770],[980,705],[1020,678],[1065,708],[1090,685],[1130,665],[1165,665],[1200,735],[1220,740],[1245,772],[1285,745],[1310,650],[1355,600],[1400,625],[1445,795],[1490,805],[1540,700]].map(traceVolA),
    ...[[0,635],[15,620],[30,615],[50,550],[78,457],[100,462],[123,483],[145,412],[168,470],[190,495],[213,545],[235,508],[258,558],[280,570],[302,610],[325,620],[347,670],[370,650],[392,665],[414,665],[437,675],[459,637],[482,637],[504,655],[548,655],[590,730],[616,785],[660,828],[683,830],[705,850],[728,850],[750,818],[772,835],[817,850],[861,875],[885,885],[907,880],[929,770],[952,670],[974,490],[997,310],[1018,215],[1041,245],[1063,260],[1086,350],[1109,440],[1130,560],[1153,598],[1175,592],[1197,540],[1222,548],[1243,543],[1265,520],[1287,580],[1310,675],[1330,706]].map(traceVolB)
];
const volMa10 = [
    ...[[10,603],[35,578],[55,590],[100,545],[120,542],[150,568],[185,580],[225,640],[285,700],[325,745],[355,745],[385,768],[445,770],[490,773],[560,795],[630,790],[660,800],[710,770],[775,755],[815,787],[840,782],[860,790],[900,795],[935,800],[975,770],[1035,732],[1065,732],[1090,695],[1130,670],[1200,710],[1225,710],[1245,718],[1310,695],[1330,683],[1415,682],[1445,705],[1490,705],[1510,690],[1540,725]].map(traceVolA),
    ...[[0,715],[30,710],[60,635],[90,560],[125,550],[145,512],[170,500],[190,475],[213,503],[255,484],[300,550],[325,578],[370,605],[430,645],[480,650],[525,660],[570,665],[620,720],[660,740],[682,760],[705,800],[728,817],[750,817],[800,838],[840,860],[860,848],[907,862],[950,760],[1010,580],[1041,520],[1063,465],[1090,440],[1130,385],[1155,422],[1175,425],[1197,445],[1220,490],[1243,550],[1265,560],[1287,585],[1330,627]].map(traceVolB)
];

let svg = '';

function seg(x1, y1, x2, y2, color, w = 1) {
    svg += `<line x1="${x1}" y1="${y1}" x2="${x2}" y2="${y2}" stroke="${color}" stroke-width="${w}"/>`;
}
function poly(pts, color, w = 1.5) {
    const d = pts.map(p => p[0].toFixed(1) + ',' + p[1].toFixed(1)).join(' ');
    svg += `<polyline points="${d}" fill="none" stroke="${color}" stroke-width="${w}" stroke-linejoin="round"/>`;
}
function dotted(y, x1 = 0, x2 = 1710) {
    svg += `<line x1="${x1}" y1="${y}" x2="${x2}" y2="${y}" stroke="#8c0000" stroke-width="1.5" stroke-dasharray="1.5 3.5"/>`;
}
function label(x, y, str, color, extra = '') {
    svg += `<text x="${x}" y="${y}" fill="${color}" ${extra}>${str}</text>`;
}
function axisLabel(y, str) {
    svg += `<text class="axis-label" x="1778" y="${y}">${str}</text>`;
}
function arrow(x, y, up) {
    const color = up ? '#f00000' : '#40e8f0';
    const tip = up ? y - 9 : y + 9;
    const base = up ? y - 4 : y + 4;
    seg(x, y + (up ? 9 : -9), x, tip, color, 1.3);
    svg += `<path d="M${x - 3.5} ${base} L${x} ${tip} L${x + 3.5} ${base} Z" fill="${color}"/>`;
}
function chevron(x, y) {
    svg += `<circle cx="${x}" cy="${y}" r="8" fill="#6e6e6e"/><path d="M${x - 4} ${y - 2} L${x} ${y + 3} L${x + 4} ${y - 2}" fill="none" stroke="#222" stroke-width="1.6"/>`;
}
function candle(i, row, map) {
    const x = Math.round(barX(i)) + .5;
    const [high, top, bottom, low] = [row[1], row[2], row[3], row[4]].map(v => map([0, v])[1]);
    const color = row[0] ? RED : CYAN;
    seg(x, high, x, top, color);
    seg(x, bottom, x, low, color);
    if (bottom - top < 3) {
        seg(x - 5, top + 1, x + 6, top + 1, color, 2.5);
    } else if (row[0]) {
        svg += `<rect x="${x - 4.5}" y="${top}" width="9" height="${bottom - top}" fill="#000" stroke="${color}" stroke-width="1.5"/>`;
    } else {
        svg += `<rect x="${x - 5.5}" y="${top}" width="11" height="${bottom - top}" fill="${color}"/>`;
    }
}
function volBar(i, row, map) {
    const x = Math.round(barX(i));
    const top = map([0, row[1]])[1];
    if (row[0]) {
        svg += `<rect x="${x - 4.5}" y="${top}" width="10" height="${1276.5 - top}" fill="#000" stroke="${RED}" stroke-width="1.4"/>`;
    } else {
        svg += `<rect x="${x - 5}" y="${top}" width="11" height="${1277 - top}" fill="${CYAN}"/>`;
    }
}
function axisTicks(list) {
    list.forEach(y => seg(1710, y, 1724, y, GRID, 1.5));
    for (let n = 0; n < list.length - 1; n++) {
        const mid = (list[n] + list[n + 1]) / 2;
        seg(1710, mid, 1717, mid, GRID, 1.5);
    }
}

// main price panel
const priceGrid = [[128.3, '26.00'], [198.7, '24.00'], [267.7, '22.00'], [338.3, '20.00'], [407.3, '18.00'], [478, '16.00'], [547, '14.00'], [616.7, '12.00']];
priceGrid.forEach(([y, t]) => {
    dotted(y);
    axisLabel(y, t);
});
axisTicks(priceGrid.map(g => g[0]));

svg += '<rect x="1437" y="311" width="273" height="16" fill="#808080"/>';
label(1441, 342, '20.28 - 20.80', '#a0a0a0');

candlesA.forEach((c, i) => candle(i, c, traceA));
candlesB.forEach((c, i) => candle(i + 51, c, traceB));
candlesC.forEach((c, i) => candle(i + 108, c, traceC));

poly(ma120, '#9a9a9a', 1.6);
poly(ma60, '#00d800', 1.6);
poly(ma20, '#d000d0', 1.6);
poly(ma10, '#c8c800', 1.6);
poly(ma5, '#e8e8e8', 1.4);
poly(ma250, '#0000e8', 1.6);

seg(578, 621, 560, 621, '#a0a0a0', 1.2);
svg += '<path d="M566 616 L560 621 L566 626" fill="none" stroke="#a0a0a0"/>';
label(579, 621, '11.93', '#a0a0a0');
seg(1528, 104, 1511, 99, '#a0a0a0', 1.2);
svg += '<path d="M1517 96 L1511 99 L1516 104" fill="none" stroke="#a0a0a0"/>';
label(1533, 106, '26.88', '#a0a0a0');

// chart header
label(5, 81, '西藏城投(日线)', '#b4b4b4', 'class="thin"');
chevron(143, 81);
[
    [158, 'MA5: 22.63', '#c8c8c8', 255, false],
    [271, 'MA10: 23.40', '#e8e800', 377, false],
    [393, 'MA20: 23.58', '#f000f0', 500, true],
    [516, 'MA60: 20.90', '#00e800', 624, true],
    [640, 'MA120: 19.14', '#a0a0a0', 757, false],
    [773, 'MA250: 22.55', '#0000e8', 890, false]
].forEach(([x, t, c, ax, up]) => {
    label(x, 81, t, c, 'style="font-size:17.500px"');
    arrow(ax, 81, up);
});
svg += '<path d="M1668 73 L1676 81 L1668 89 L1660 81 Z" fill="none" stroke="#707070" stroke-width="1.3"/>';
svg += '<rect x="1690" y="74" width="15" height="15" rx="2" fill="#222" stroke="#888" stroke-width="1.3"/><rect x="1698" y="77" width="4" height="9" fill="#aaa"/>';

// event markers under the price panel
[[522, '跌', '#0a7a0a', '#e8e8e8'], [1060, '', 'none', '#f00000'], [1436, '榜', '#5a3c18', '#f0b070'], [1563, '财', '#10287c', '#d0e0f8']].forEach(([x, t, bg, fg]) => {
    if (t) {
        svg += `<rect x="${x}" y="626" width="19" height="19" fill="${bg}"/>`;
        svg += `<text x="${x + 1}" y="635" fill="${fg}" style="font-size:17px">${t}</text>`;
    } else {
        svg += `<path d="M${x + 7} 630 l6 3 l-6 3 l6 3 l-4 3" fill="none" stroke="${fg}" stroke-width="1.5"/>`;
    }
});

// indicator panel
seg(0, 647, 540, 647, '#c00000', 2);
seg(1620, 647, 1786, 647, '#c00000', 2);
dotted(694, 0, 540);
dotted(694, 1620);
seg(6, 741.7, 540, 741.7, '#c8c800', 2);
seg(1620, 741.7, 1664, 741.7, '#c8c800', 2);
dotted(790);
dotted(837);
[[694, '15.00'], [741.7, '10.00'], [790, '5.00'], [837, '0.00']].forEach(([y, t]) => axisLabel(y, t));
axisTicks([694, 741.7, 790, 837]);
poly(indLeft, '#00c850', 1.5);
poly(indRight, '#00c850', 1.5);
poly([[534, 688], [540, 681]], '#f00000', 3);
chevron(11, 659);
label(27, 660, '红色露出是买', '#b4b4b4', 'class="thin"');
label(143, 660, '我5: 7.86', '#00d860');
arrow(222, 660, true);
label(238, 660, '我买: -', '#e82020');
label(297, 660, ': 10.00', '#d8d800');

// volume panel
seg(0, 924, 1786, 924, '#c00000', 2);
chevron(11, 937);
label(27, 938, 'VOLUME: 202169.72', '#b4b4b4');
arrow(205, 938, true);
label(221, 938, 'MA5: 227605.77', '#c8c8c8');
arrow(358, 938, false);
label(376, 938, 'MA10: 285344.81', '#e8e800');
arrow(523, 938, false);

const volGrid = [[990, '60000'], [1037.7, '50000'], [1084, '40000'], [1132, '30000'], [1180, '20000'], [1228, '10000']];
volGrid.forEach(([y, t]) => {
    dotted(y);
    axisLabel(y, t);
});
axisTicks(volGrid.map(g => g[0]));
volA.forEach((v, i) => volBar(i, v, traceVolA));
volB.forEach((v, i) => volBar(i + 70, v, traceVolB));
poly(volMa5, '#e8e8e8', 1.3);
poly(volMa10, '#c8c800', 1.6);
svg += `<rect x="1710.5" y="1259.5" width="39" height="22" fill="#000" stroke="${GRID}"/>`;
label(1715, 1271, 'X10', '#d43030');

// axis lines
seg(1710, 67, 1710, 1282, GRID, 1.5);

document.getElementById('chart').innerHTML = svg;

// trade list on the right
const ticks = [
    ['13:59', '21.26', '1.1', 'S', 2], ['13:59', '21.25', '16.6', 'S', 24], ['13:59', '21.25', '5.3', 'B', 13],
    ['13:59', '21.25', '5.5', 'B', 13], ['13:59', '21.25', '6.6', 'B', 10], ['13:59', '21.25', '7.7', 'S', 7],
    ['13:59', '21.25', '2.1', 'S', 4], ['13:59', '21.25', '0.2', 'S', 1], ['13:59', '21.27', '0.9', 'B', 2],
    ['13:59', '21.26', '1.3', 'B', 4], ['13:59', '21.25', '0.2', 'S', 1], ['13:59', '21.25', '1.7', 'S', 7],
    ['13:59', '21.25', '7.9', 'S', 8], ['13:59', '21.25', '0.9', 'B', 2], ['14:00', '21.24', '1.1', 'S', 2],
    ['14:00', '21.24', '3.6', 'S', 3], ['14:00', '21.25', '5.1', 'B', 5], ['14:00', '21.26', '2.3', 'B', 2],
    ['14:00', '21.26', '0.6', 'B', 2], ['14:00', '21.27', '0.6', 'B', 3], ['14:00', '21.26', '1.2', 'S', 2],
    ['14:00', '21.27', '1.7', 'B', 4]
];
document.getElementById('ticks').innerHTML = ticks.map(([t, p, v, side, n]) => `
    <div class="tick-row">
        <b class="t">${t}</b><b class="up-g">${p}</b><b class="vol">${v}<small>万</small></b>
        <span class="bs ${side === 'B' ? 'bs-b' : 'bs-s'}">${side}</span><b class="n">${n}</b>
    </div>`).join('');
```
